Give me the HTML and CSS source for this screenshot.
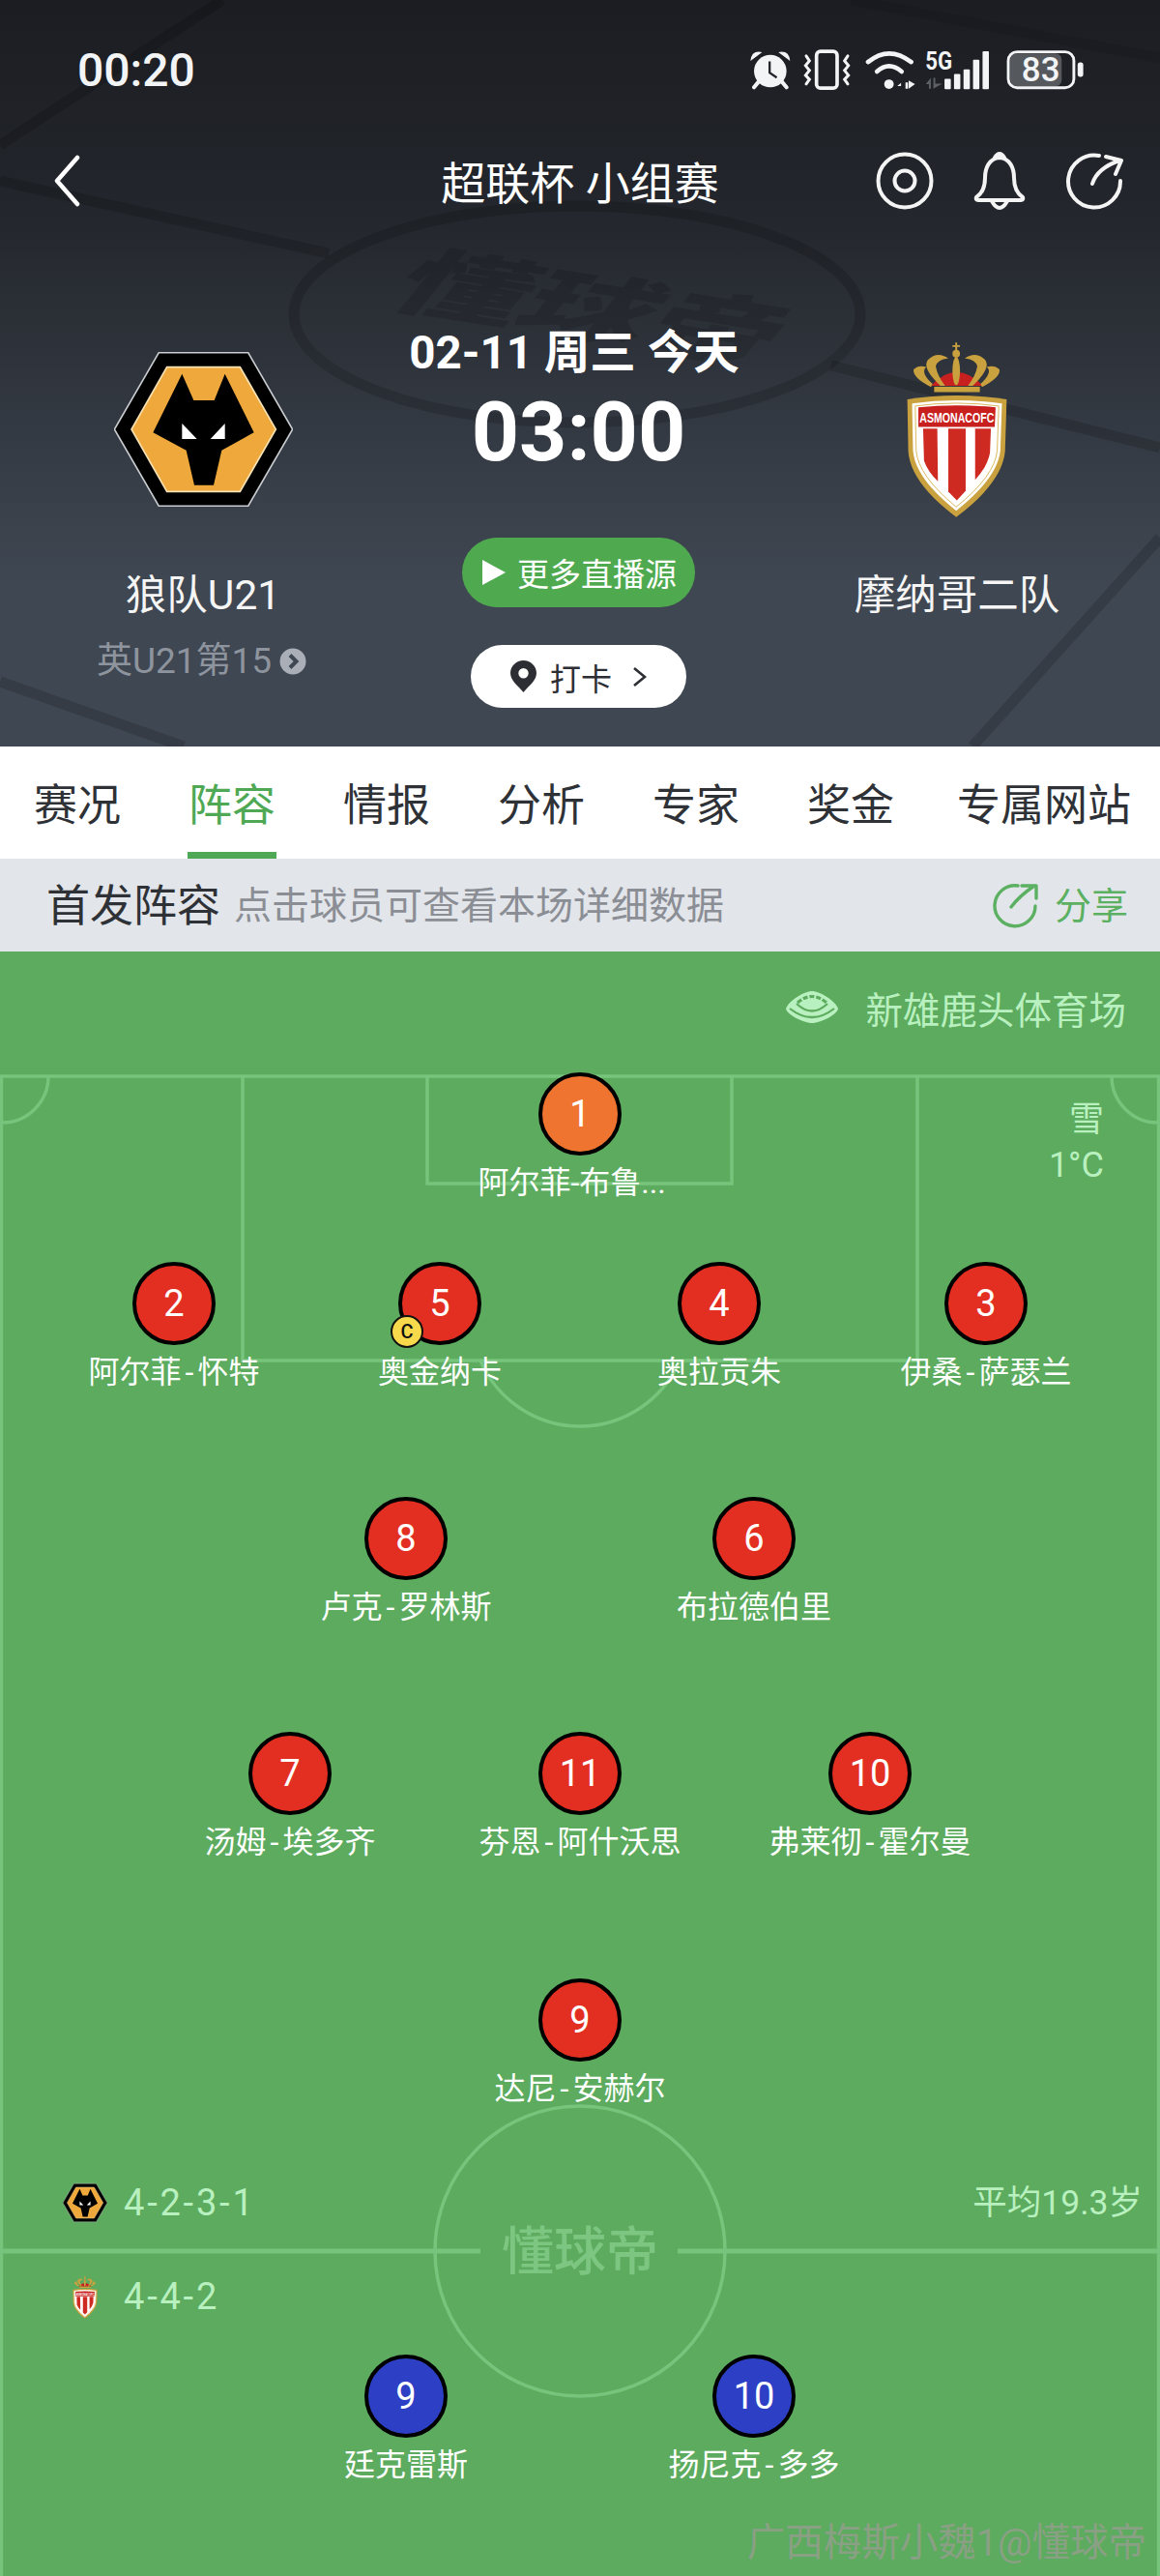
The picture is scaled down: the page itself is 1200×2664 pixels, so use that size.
FILE: index.html
```html
<!DOCTYPE html>
<html lang="zh-CN">
<head>
<meta charset="utf-8">
<title>阵容</title>
<link rel="stylesheet" href="styles.css">
</head>
<body>
<svg class="sprite" aria-hidden="true">
  <symbol id="wolves" viewBox="52 70 553 480">
    <polygon points="190,72 467,72 605,310 467,548 190,548 52,310" fill="#000" stroke="#c9ccd0" stroke-width="5"/>
    <polygon points="215,117 442,117 553,310 442,503 215,503 105,310" fill="#eea83c" stroke="#f8e2b4" stroke-width="5"/>
    <polygon points="262,138 298,220 362,220 395,138 485,320 385,375 360,483 300,483 275,375 172,320" fill="#000"/>
    <polygon points="262,292 308,340 262,340" fill="#fff"/>
    <polygon points="395,292 395,340 350,340" fill="#fff"/>
  </symbol>
  <symbol id="monaco" viewBox="410 90 325 560">
    <path d="M415 275 Q570 250 730 275 L725 440 Q715 540 570 648 Q425 540 418 440Z" fill="#c9a13f"/>
    <path d="M430 288 Q570 268 715 288 L710 438 Q700 525 570 628 Q440 525 433 438Z" fill="#fff"/>
    <path d="M440 296 Q570 278 705 296 L700 438 Q692 518 570 616 Q450 518 443 438Z" fill="none" stroke="#d8b65a" stroke-width="3"/>
    <path d="M450 300 Q570 288 695 300 L692 362 L450 362Z" fill="#c8201f"/>
    <text x="572" y="348" class="mon-text" textLength="236" lengthAdjust="spacingAndGlyphs">ASMONACOFC</text>
    <path d="M465 368 L510 368 L512 535 Q480 505 468 470Z" fill="#cf2a22"/>
    <path d="M545 368 L600 368 L600 565 L572 595 L545 568Z" fill="#cf2a22"/>
    <path d="M630 368 L680 368 L677 445 Q668 490 630 530Z" fill="#cf2a22"/>
    <rect x="500" y="235" width="145" height="17" fill="#c9a13f"/>
    <path d="M490 232 Q570 145 655 232Z" fill="#c8201f"/>
    <path d="M520 232 Q460 175 480 150 Q510 120 545 145 Q510 150 505 170 Q510 200 535 232Z" fill="#c9a13f"/>
    <path d="M622 232 Q682 175 662 150 Q632 120 597 145 Q632 150 637 170 Q632 200 607 232Z" fill="#c9a13f"/>
    <path d="M490 236 Q430 205 435 180 Q450 165 475 172 Q455 190 495 226Z" fill="#c9a13f"/>
    <path d="M652 236 Q712 205 707 180 Q692 165 667 172 Q687 190 647 226Z" fill="#c9a13f"/>
    <ellipse cx="570" cy="185" rx="12" ry="45" fill="#c9a13f"/>
    <circle cx="570" cy="130" r="12" fill="#c9a13f"/>
    <path d="M570 95 V122 M558 106 H582" stroke="#c9a13f" stroke-width="6"/>
  </symbol>
</svg>

<div class="page">
  <header class="hero">
    <svg class="hero-bg" viewBox="0 0 1200 772" aria-hidden="true">
      <g fill="none" stroke="#000" stroke-opacity=".15" stroke-width="11">
        <path d="M0 187 L340 262"/>
        <path d="M230 0 L0 150"/>
        <path d="M860 378 L1200 463"/>
        <path d="M880 0 L1200 60" stroke-opacity=".07"/>
        <path d="M1006 772 L1200 556"/>
        <path d="M0 705 L190 772"/>
        <ellipse cx="597" cy="325" rx="293" ry="112"/>
      </g>
      <text class="hero-mark" transform="translate(592 345) rotate(9) skewX(-30) scale(1 .6)" text-anchor="middle">懂球帝</text>
    </svg>

    <div class="status">
      <span class="clock">00:20</span>
      <div class="status-icons">
        <svg class="i-alarm" viewBox="228 68 125 125">
          <circle cx="290" cy="135" r="50" fill="#f2f4f5"/>
          <path d="M229 104 Q232 70 265 77Z M351 104 Q348 70 315 77Z" fill="#f2f4f5"/>
          <path d="M240 185 L254 168 M340 185 L326 168" stroke="#f2f4f5" stroke-width="12" stroke-linecap="round"/>
          <path d="M288 105 V140 L310 155" fill="none" stroke="#23262c" stroke-width="7"/>
        </svg>
        <svg class="i-vib" viewBox="395 65 150 125">
          <rect x="436" y="71" width="64" height="114" rx="12" fill="none" stroke="#f2f4f5" stroke-width="11"/>
          <path d="M404 85 L414 100 L402 115 L414 130 L402 145 L414 158 L404 172 M533 85 L523 100 L535 115 L523 130 L535 145 L523 158 L533 172" fill="none" stroke="#f2f4f5" stroke-width="9" stroke-linecap="round"/>
        </svg>
        <svg class="i-net" viewBox="588 62 387 128">
          <g fill="none" stroke="#f2f4f5" stroke-linecap="round">
            <path d="M594 102 Q660 48 730 102" stroke-width="14"/>
            <path d="M622 132 Q660 98 700 132" stroke-width="14"/>
          </g>
          <circle cx="660" cy="172" r="15" fill="#f2f4f5"/>
          <path d="M698 186 V168 L686 178 H698Z M712 186 H720 V166 H712Z M722 160 V186 L742 172Z" fill="#f2f4f5"/>
          <text x="775" y="125" class="net-5g" textLength="85" lengthAdjust="spacingAndGlyphs">5G</text>
          <path d="M776 172 L792 152 V186 H786 V172Z M800 152 V186 L828 170 H806 V152Z" fill="#5c5f65"/>
          <g fill="#f2f4f5">
            <rect x="835" y="155" width="20" height="33" rx="3"/>
            <rect x="865" y="140" width="20" height="48" rx="3"/>
            <rect x="895" y="125" width="20" height="63" rx="3"/>
            <rect x="925" y="95" width="20" height="93" rx="3"/>
            <rect x="955" y="68" width="20" height="120" rx="3"/>
          </g>
        </svg>
        <svg class="i-batt" viewBox="1022 62 250 130">
          <rect x="1034" y="75" width="165" height="105" rx="20" fill="#55585d"/>
          <rect x="1028" y="70" width="210" height="115" rx="28" fill="none" stroke="#f2f4f5" stroke-width="9"/>
          <rect x="1250" y="104" width="18" height="46" rx="8" fill="#f2f4f5"/>
          <text x="1132" y="165" class="batt-num" text-anchor="middle">83</text>
        </svg>
      </div>
    </div>

    <nav class="topnav">
      <svg class="back" viewBox="0 0 30 54"><path d="M26 3 L5 27 L26 51" fill="none" stroke="#fff" stroke-width="4.5" stroke-linecap="round" stroke-linejoin="round"/></svg>
      <h1 class="title">超联杯 小组赛</h1>
      <div class="nav-icons">
        <svg class="nav-i" viewBox="0 0 60 60"><circle cx="30" cy="30" r="27.5" fill="none" stroke="#f4f4f4" stroke-width="4"/><circle cx="30" cy="30" r="10.5" fill="none" stroke="#f4f4f4" stroke-width="4"/></svg>
        <svg class="nav-i" viewBox="0 0 60 60"><path d="M30 6 C19 7 15 17 15 27 C15 37 12 43 6 47 Q5 50 8 50 H52 Q55 50 54 47 C48 43 45 37 45 27 C45 17 41 7 30 6Z M25 6 Q30 -2 35 6 M22 51 Q30 65 38 51" fill="none" stroke="#f4f4f4" stroke-width="4" stroke-linejoin="round" stroke-linecap="round"/></svg>
        <svg class="nav-i" viewBox="0 0 60 60"><path d="M35 4 A27 27 0 1 0 57 30 M28 33 Q33 17 56 9 M42 5 L58 9 L52 23" fill="none" stroke="#f4f4f4" stroke-width="4" stroke-linecap="round" stroke-linejoin="round"/></svg>
      </div>
    </nav>

    <section class="match">
      <div class="team">
        <div class="crest"><svg class="crest-wolves"><use href="#wolves"/></svg></div>
        <div class="team-name">狼队U21</div>
        <div class="team-rank">英U21第15
          <svg class="rank-i" viewBox="0 0 28 28"><circle cx="14" cy="14" r="13.5" fill="#a9aeb7"/><path d="M11 7.5 L17.5 14 L11 20.5" fill="none" stroke="#3f4753" stroke-width="4"/></svg>
        </div>
      </div>
      <div class="centre">
        <div class="date">02-11 周三 今天</div>
        <div class="kick">03:00</div>
        <a class="btn-live"><svg class="play" viewBox="0 0 24 26"><polygon points="0,0 24,13 0,26" fill="#fff"/></svg>更多直播源</a>
        <a class="btn-check">
          <svg class="pin" viewBox="0 0 27 33"><path fill-rule="evenodd" d="M13.5 0 C6 0 0 6 0 13 C0 21 8 26 13.5 33 C19 26 27 21 27 13 C27 6 21 0 13.5 0Z M13.5 8 A5.2 5.2 0 1 1 13.5 18.4 A5.2 5.2 0 1 1 13.5 8Z" fill="#2c2e33"/></svg>
          打卡
          <svg class="chev" viewBox="0 0 15 22"><path d="M2 2 L13 11 L2 20" fill="none" stroke="#2c2e33" stroke-width="2.6"/></svg>
        </a>
      </div>
      <div class="team">
        <div class="crest"><svg class="crest-monaco"><use href="#monaco"/></svg></div>
        <div class="team-name">摩纳哥二队</div>
      </div>
    </section>
  </header>

  <div class="tabs">
    <a class="tab">赛况</a>
    <a class="tab active">阵容</a>
    <a class="tab">情报</a>
    <a class="tab">分析</a>
    <a class="tab">专家</a>
    <a class="tab">奖金</a>
    <a class="tab wide">专属网站</a>
  </div>

  <div class="lineup-bar">
    <span class="lb-title">首发阵容</span>
    <span class="lb-hint">点击球员可查看本场详细数据</span>
    <a class="lb-share">
      <svg class="share-i" viewBox="0 0 48 47"><path d="M27 3 A21 21 0 1 0 45 24 M20 25 Q28 14 44 3 M31 3 H46 V16" fill="none" stroke="#5bb062" stroke-width="3.4" stroke-linecap="round" stroke-linejoin="round"/></svg>
      分享
    </a>
  </div>

  <main class="pitch">
    <svg class="pitch-lines" viewBox="0 0 1200 1680" aria-hidden="true">
      <g fill="none" stroke="#77c47c" stroke-width="3.5">
        <path d="M1.5 1680 V129 H1198.5 V1680"/>
        <path d="M251 129 V423 H949 V129"/>
        <path d="M442 129 V240 H757 V129"/>
        <path d="M497 423 A112 112 0 0 0 703 423"/>
        <path d="M50 129 A48 48 0 0 1 2 177"/>
        <path d="M1150 129 A48 48 0 0 0 1198 177"/>
        <path d="M0 1344 H497 M701 1344 H1200" stroke-width="5"/>
        <circle cx="600" cy="1344" r="150"/>
      </g>
      <text class="pitch-mark" x="600" y="1364" text-anchor="middle">懂球帝</text>
    </svg>

    <div class="stadium">
      <svg class="stadium-i" viewBox="0 0 56 34">
        <path d="M28 0 C36 0 52 10 55 18 C55 23 38 33 28 33 C18 33 1 23 1 18 C4 10 20 0 28 0Z" fill="#b9f0bf"/>
        <path d="M5 18 Q28 36 51 18" fill="none" stroke="#5cab5e" stroke-width="2.2"/>
        <path d="M12 13 Q28 28 44 13" fill="none" stroke="#5cab5e" stroke-width="2.2"/>
        <path d="M13 12 Q28 -1 43 12" fill="none" stroke="#5cab5e" stroke-width="3.2" stroke-dasharray="5 2"/>
      </svg>
      <span>新雄鹿头体育场</span>
    </div>

    <div class="weather">雪<br>1°C</div>

    <div class="player gk pos-gk"><div class="shirt orange">1</div><div class="pname trunc">阿尔菲-布鲁...</div></div>
    <div class="player pos-h2"><div class="shirt red">2</div><div class="pname">阿尔菲<span class="hy">-</span>怀特</div></div>
    <div class="player pos-h5"><div class="shirt red">5<span class="cap">C</span></div><div class="pname">奥金纳卡</div></div>
    <div class="player pos-h4"><div class="shirt red">4</div><div class="pname">奥拉贡朱</div></div>
    <div class="player pos-h3"><div class="shirt red">3</div><div class="pname">伊桑<span class="hy">-</span>萨瑟兰</div></div>
    <div class="player pos-h8"><div class="shirt red">8</div><div class="pname">卢克<span class="hy">-</span>罗林斯</div></div>
    <div class="player pos-h6"><div class="shirt red">6</div><div class="pname">布拉德伯里</div></div>
    <div class="player pos-h7"><div class="shirt red">7</div><div class="pname">汤姆<span class="hy">-</span>埃多齐</div></div>
    <div class="player pos-h11"><div class="shirt red">11</div><div class="pname">芬恩<span class="hy">-</span>阿什沃思</div></div>
    <div class="player pos-h10"><div class="shirt red">10</div><div class="pname">弗莱彻<span class="hy">-</span>霍尔曼</div></div>
    <div class="player pos-h9"><div class="shirt red">9</div><div class="pname">达尼<span class="hy">-</span>安赫尔</div></div>
    <div class="player pos-a9"><div class="shirt blue">9</div><div class="pname">廷克雷斯</div></div>
    <div class="player pos-a10"><div class="shirt blue">10</div><div class="pname">扬尼克<span class="hy">-</span>多多</div></div>

    <div class="formations">
      <div class="fm"><svg class="fm-wolves"><use href="#wolves"/></svg><span class="fm-code">4-2-3-1</span></div>
      <div class="fm"><svg class="fm-monaco"><use href="#monaco"/></svg><span class="fm-code">4-4-2</span></div>
    </div>
    <div class="avg">平均19.3岁</div>
    <div class="credit">广西梅斯小魏1@懂球帝</div>
  </main>
</div>
</body>
</html>
```

FILE: styles.css
```css
* { box-sizing: border-box; }
html, body { margin: 0; padding: 0; }
body {
  width: 1200px;
  height: 2664px;
  overflow: hidden;
  background: #5cab5e;
  font-family: Roboto, "Noto Sans CJK SC", sans-serif;
  color: #fff;
}
.sprite { position: absolute; width: 0; height: 0; }
.mon-text {
  font-family: "Liberation Sans", sans-serif;
  font-weight: 700;
  font-size: 46px;
  fill: #fff;
  text-anchor: middle;
}
.page { display: flex; flex-direction: column; width: 1200px; }

/* hero */
.hero {
  position: relative;
  height: 772px;
  background: linear-gradient(180deg, #1b1d22 0%, #23262c 28%, #3f4752 78%, #3f4752 100%);
  overflow: hidden;
}
.hero-bg { position: absolute; left: 0; top: 0; width: 1200px; height: 772px; }
.hero-mark {
  font-family: "Noto Sans CJK SC", sans-serif;
  font-weight: 900;
  font-size: 132px;
  fill: #000;
  fill-opacity: .13;
}
.status, .topnav, .match { position: relative; }
.status {
  display: flex;
  align-items: center;
  justify-content: space-between;
  height: 144px;
  padding: 0 77px 0 80px;
}
.clock { font-size: 48px; font-weight: 500; color: #f2f4f5; }
.status-icons { display: flex; align-items: center; }
.status-icons svg { display: block; height: 42px; }
.i-alarm { width: 42px; }
.i-vib { width: 50px; margin-left: 13px; }
.i-net { width: 129px; margin-left: 14px; }
.i-batt { width: 83px; margin-left: 16px; }
.net-5g {
  font-family: Roboto, sans-serif;
  font-weight: 700;
  font-size: 76px;
  fill: #f2f4f5;
}
.batt-num {
  font-family: Roboto, sans-serif;
  font-weight: 500;
  font-size: 108px;
  fill: #f2f4f5;
}

.topnav {
  display: flex;
  align-items: center;
  justify-content: center;
  height: 86px;
  padding-bottom: 2px;
}
.back { position: absolute; left: 54px; top: 16px; width: 30px; height: 54px; }
.title { margin: 0; font-size: 46px; font-weight: 400; color: #fff; }
.nav-icons {
  position: absolute;
  right: 38px;
  top: 13px;
  display: flex;
  gap: 38px;
}
.nav-i { display: block; width: 60px; height: 60px; }

.match {
  display: grid;
  grid-template-columns: 420px 360px 420px;
  padding-top: 100px;
}
.team { display: flex; flex-direction: column; align-items: center; padding-top: 22px; }
.crest { display: flex; align-items: center; justify-content: center; height: 184px; }
.crest-wolves { width: 185px; height: 160px; }
.crest-monaco { width: 106px; height: 184px; }
.team-name { margin-top: 52px; font-size: 42.5px; line-height: 56px; color: #f5f5f5; }
.team-rank {
  display: flex;
  align-items: center;
  gap: 8px;
  margin-top: 15px;
  margin-right: 3px;
  font-size: 37px;
  line-height: 50px;
  color: #8e949e;
}
.rank-i { width: 28px; height: 28px; }

.centre { display: flex; flex-direction: column; align-items: center; padding-right: 3px; }
.date { margin-right: 9px; font-size: 47.5px; font-weight: 700; line-height: 70px; color: #fff; }
.kick { margin-top: 2px; font-size: 86px; font-weight: 700; line-height: 90px; color: #fff; }
.btn-live {
  display: flex;
  align-items: center;
  gap: 12px;
  height: 72px;
  margin-top: 64px;
  padding: 0 19px 0 21px;
  border-radius: 36px;
  background: #4faa4f;
  font-size: 33px;
  color: #fff;
}
.play { width: 24px; height: 26px; }
.btn-check {
  display: flex;
  align-items: center;
  height: 65px;
  margin-top: 39px;
  padding: 0 41px 0 41px;
  border-radius: 33px;
  background: #fff;
  font-size: 32px;
  color: #2c2e33;
}
.pin { width: 27px; height: 33px; margin-right: 14px; }
.chev { width: 15px; height: 22px; margin-left: 21px; }

/* tabs */
.tabs { display: flex; height: 116px; background: #fff; }
.tab {
  position: relative;
  display: flex;
  align-items: center;
  justify-content: center;
  flex: 0 0 160px;
  padding-bottom: 2px;
  font-size: 45px;
  color: #2e3136;
}
.tab.wide { flex-basis: 240px; }
.tab.active { color: #4fa954; }
.tab.active::after {
  content: "";
  position: absolute;
  left: 34px;
  right: 34px;
  bottom: 0;
  height: 7px;
  background: #4fa954;
}

/* lineup bar */
.lineup-bar {
  display: flex;
  align-items: center;
  height: 96px;
  padding: 0 33px 6px 48px;
  background: #e2e5ea;
}
.lb-title { font-size: 45px; color: #2e3136; }
.lb-hint { margin-left: 14px; font-size: 39px; color: #8b8e94; }
.lb-share {
  display: flex;
  align-items: center;
  gap: 17px;
  margin-left: auto;
  font-size: 38px;
  color: #5bb062;
}
.share-i { width: 48px; height: 47px; margin-top: 6px; }

/* pitch */
.pitch { position: relative; height: 1680px; background: #5cab5e; }
.pitch-lines { position: absolute; left: 0; top: 0; width: 1200px; height: 1680px; }
.pitch-mark {
  font-family: "Noto Sans CJK SC", sans-serif;
  font-weight: 500;
  font-size: 54px;
  fill: #7cc681;
}
.stadium {
  position: relative;
  display: flex;
  align-items: center;
  justify-content: flex-end;
  gap: 27px;
  height: 56px;
  margin-top: 30px;
  padding-right: 35px;
  font-size: 38.5px;
  color: #b9f0bf;
}
.stadium-i { width: 56px; height: 34px; }
.weather {
  position: absolute;
  right: 58px;
  top: 151px;
  font-size: 36px;
  line-height: 47px;
  text-align: right;
  color: #b9f0bf;
}

.player {
  position: absolute;
  display: flex;
  flex-direction: column;
  align-items: center;
  width: 320px;
}
.shirt {
  position: relative;
  display: flex;
  align-items: center;
  justify-content: center;
  width: 86px;
  height: 86px;
  border: 4px solid #000;
  border-radius: 50%;
  font-size: 38px;
  color: #fff;
}
.red { background: #e32f22; }
.orange { background: #ee7430; }
.blue { background: #2d3fc4; }
.cap {
  position: absolute;
  left: -12px;
  top: 51px;
  display: flex;
  align-items: center;
  justify-content: center;
  width: 34px;
  height: 34px;
  border: 2px solid #111;
  border-radius: 50%;
  background: #f9d94c;
  font-size: 20px;
  font-weight: 500;
  color: #111;
}
.pname { margin-top: 8px; font-size: 32px; line-height: 40px; color: #fff; white-space: nowrap; }
.pname.trunc { padding-right: 17px; }
.hy { padding: 0 4px; }

.pos-gk { left: 440px; top: 125px; }
.pos-h2 { left: 20px; top: 321px; }
.pos-h5 { left: 295px; top: 321px; }
.pos-h4 { left: 584px; top: 321px; }
.pos-h3 { left: 860px; top: 321px; }
.pos-h8 { left: 260px; top: 564px; }
.pos-h6 { left: 620px; top: 564px; }
.pos-h7 { left: 140px; top: 807px; }
.pos-h11 { left: 440px; top: 807px; }
.pos-h10 { left: 740px; top: 807px; }
.pos-h9 { left: 440px; top: 1062px; }
.pos-a9 { left: 260px; top: 1451px; }
.pos-a10 { left: 620px; top: 1451px; }

.formations {
  position: absolute;
  left: 65px;
  top: 1264px;
  display: flex;
  flex-direction: column;
  gap: 37px;
}
.fm {
  display: flex;
  align-items: center;
  gap: 17px;
  height: 60px;
  font-size: 38px;
  color: #b9f0bf;
}
.fm-code { letter-spacing: 2.8px; }
.fm-wolves { width: 46px; height: 44px; }
.fm-monaco { width: 46px; height: 45px; }
.avg {
  position: absolute;
  right: 18px;
  top: 1264px;
  font-size: 35.5px;
  line-height: 60px;
  color: #b9f0bf;
}
.credit {
  position: absolute;
  right: 14px;
  bottom: 10px;
  font-size: 39.5px;
  line-height: 48px;
  color: #8aa084;
}
```
